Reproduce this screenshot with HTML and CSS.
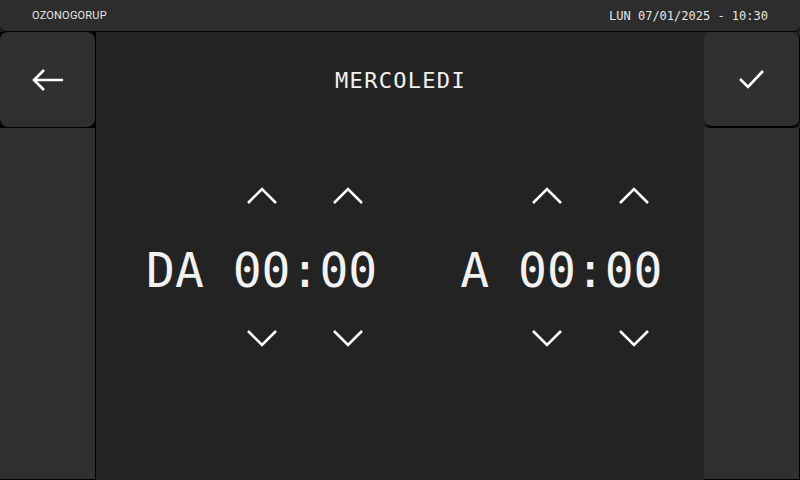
FILE: index.html
```html
<!DOCTYPE html>
<html lang="it">
<head>
<meta charset="utf-8">
<title>Orario</title>
<link rel="stylesheet" href="styles.css">
</head>
<body>
<div class="app">
  <header class="topbar">
    <span class="brand">OZONOGORUP</span>
    <span class="clock">LUN 07/01/2025 - 10:30</span>
  </header>
  <aside class="side side-left">
    <button class="tile tile-btn" aria-label="Indietro">
      <svg width="32" height="24" viewBox="0 0 32 24"><path d="M12 2 L2 12 L12 22 M2 12 H31" fill="none" stroke="#fff" stroke-width="2.6"/></svg>
    </button>
    <div class="tile tile-fill"></div>
  </aside>
  <main class="main">
    <h1 class="title">MERCOLEDI</h1>
    <div class="times">
      <div class="group">
        <span class="label">DA&nbsp;</span>
        <div class="unit">
          <svg class="chev" width="32" height="32" viewBox="0 0 32 32"><path d="M2 23 L16 9 L30 23" fill="none" stroke="#fff" stroke-width="2.6"/></svg>
          <span class="digits">00</span>
          <svg class="chev" width="32" height="32" viewBox="0 0 32 32"><path d="M2 9 L16 23 L30 9" fill="none" stroke="#fff" stroke-width="2.6"/></svg>
        </div>
        <span class="label">:</span>
        <div class="unit">
          <svg class="chev" width="32" height="32" viewBox="0 0 32 32"><path d="M2 23 L16 9 L30 23" fill="none" stroke="#fff" stroke-width="2.6"/></svg>
          <span class="digits">00</span>
          <svg class="chev" width="32" height="32" viewBox="0 0 32 32"><path d="M2 9 L16 23 L30 9" fill="none" stroke="#fff" stroke-width="2.6"/></svg>
        </div>
      </div>
      <div class="group">
        <span class="label">A&nbsp;</span>
        <div class="unit">
          <svg class="chev" width="32" height="32" viewBox="0 0 32 32"><path d="M2 23 L16 9 L30 23" fill="none" stroke="#fff" stroke-width="2.6"/></svg>
          <span class="digits">00</span>
          <svg class="chev" width="32" height="32" viewBox="0 0 32 32"><path d="M2 9 L16 23 L30 9" fill="none" stroke="#fff" stroke-width="2.6"/></svg>
        </div>
        <span class="label">:</span>
        <div class="unit">
          <svg class="chev" width="32" height="32" viewBox="0 0 32 32"><path d="M2 23 L16 9 L30 23" fill="none" stroke="#fff" stroke-width="2.6"/></svg>
          <span class="digits">00</span>
          <svg class="chev" width="32" height="32" viewBox="0 0 32 32"><path d="M2 9 L16 23 L30 9" fill="none" stroke="#fff" stroke-width="2.6"/></svg>
        </div>
      </div>
    </div>
  </main>
  <aside class="side side-right">
    <button class="tile tile-btn tile-confirm" aria-label="Conferma">
      <svg width="28" height="22" viewBox="0 0 28 22"><path d="M2 11 L10 19 L25 3" fill="none" stroke="#fff" stroke-width="2.6"/></svg>
    </button>
    <div class="tile tile-fill tile-fill-right"></div>
  </aside>
</div>
</body>
</html>
```
FILE: styles.css
```css
* { box-sizing: border-box; }
html, body { margin: 0; padding: 0; background: #000; }
.app {
  width: 800px;
  height: 480px;
  display: grid;
  grid-template-columns: 96px 1fr 96px;
  grid-template-rows: 32px 1fr;
  background: #232323;
  font-family: "DejaVu Sans Mono", monospace;
  color: #f2f2f2;
  overflow: hidden;
}
.topbar {
  grid-column: 1 / 4;
  background: #2d2d2d;
  border-bottom: 1px solid #000;
  border-radius: 0 0 6px 6px;
  display: flex;
  align-items: center;
  justify-content: space-between;
  padding: 0 32px 0 32px;
}
.brand {
  font-family: Roboto, "Noto Sans", sans-serif;
  font-size: 11px;
  letter-spacing: 0.2px;
  color: #e6e6e6;
}
.clock {
  font-family: "DejaVu Sans Mono", monospace;
  font-size: 12px;
  color: #e6e6e6;
}
.side {
  display: flex;
  flex-direction: column;
}
.side-left {
  background: #000;
  border-right: 1px solid #000;
  gap: 1px;
  padding-bottom: 1px;
}
.tile {
  background: #303030;
  border: none;
}
.tile-btn {
  height: 95px;
  border-radius: 8px;
  display: flex;
  align-items: center;
  justify-content: center;
  padding: 0;
  cursor: pointer;
}
.tile-fill { flex: 1; }
.side-right { background: #232323; }
.tile-confirm {
  height: 96px;
  border-bottom: 2px solid #000;
  border-right: 1px solid #000;
}
.tile-fill-right {
  border-right: 1px solid #000;
  border-bottom: 1px solid #000;
}
.main {
  display: flex;
  flex-direction: column;
  align-items: center;
}
.title {
  margin: 38px 0 0 0;
  font-size: 22px;
  line-height: 22px;
  font-weight: normal;
  letter-spacing: 1.3px;
  padding-left: 1px;
}
.times {
  align-self: flex-start;
  margin: 88px 0 0 50px;
  display: flex;
  gap: 83px;
}
.group {
  display: flex;
  align-items: flex-start;
  font-size: 48px;
  line-height: 48px;
}
.label {
  margin-top: 66px;
  white-space: pre;
}
.unit {
  display: flex;
  flex-direction: column;
  align-items: center;
}
.digits { margin: 34px 0 28px; }
.chev { display: block; }
```
